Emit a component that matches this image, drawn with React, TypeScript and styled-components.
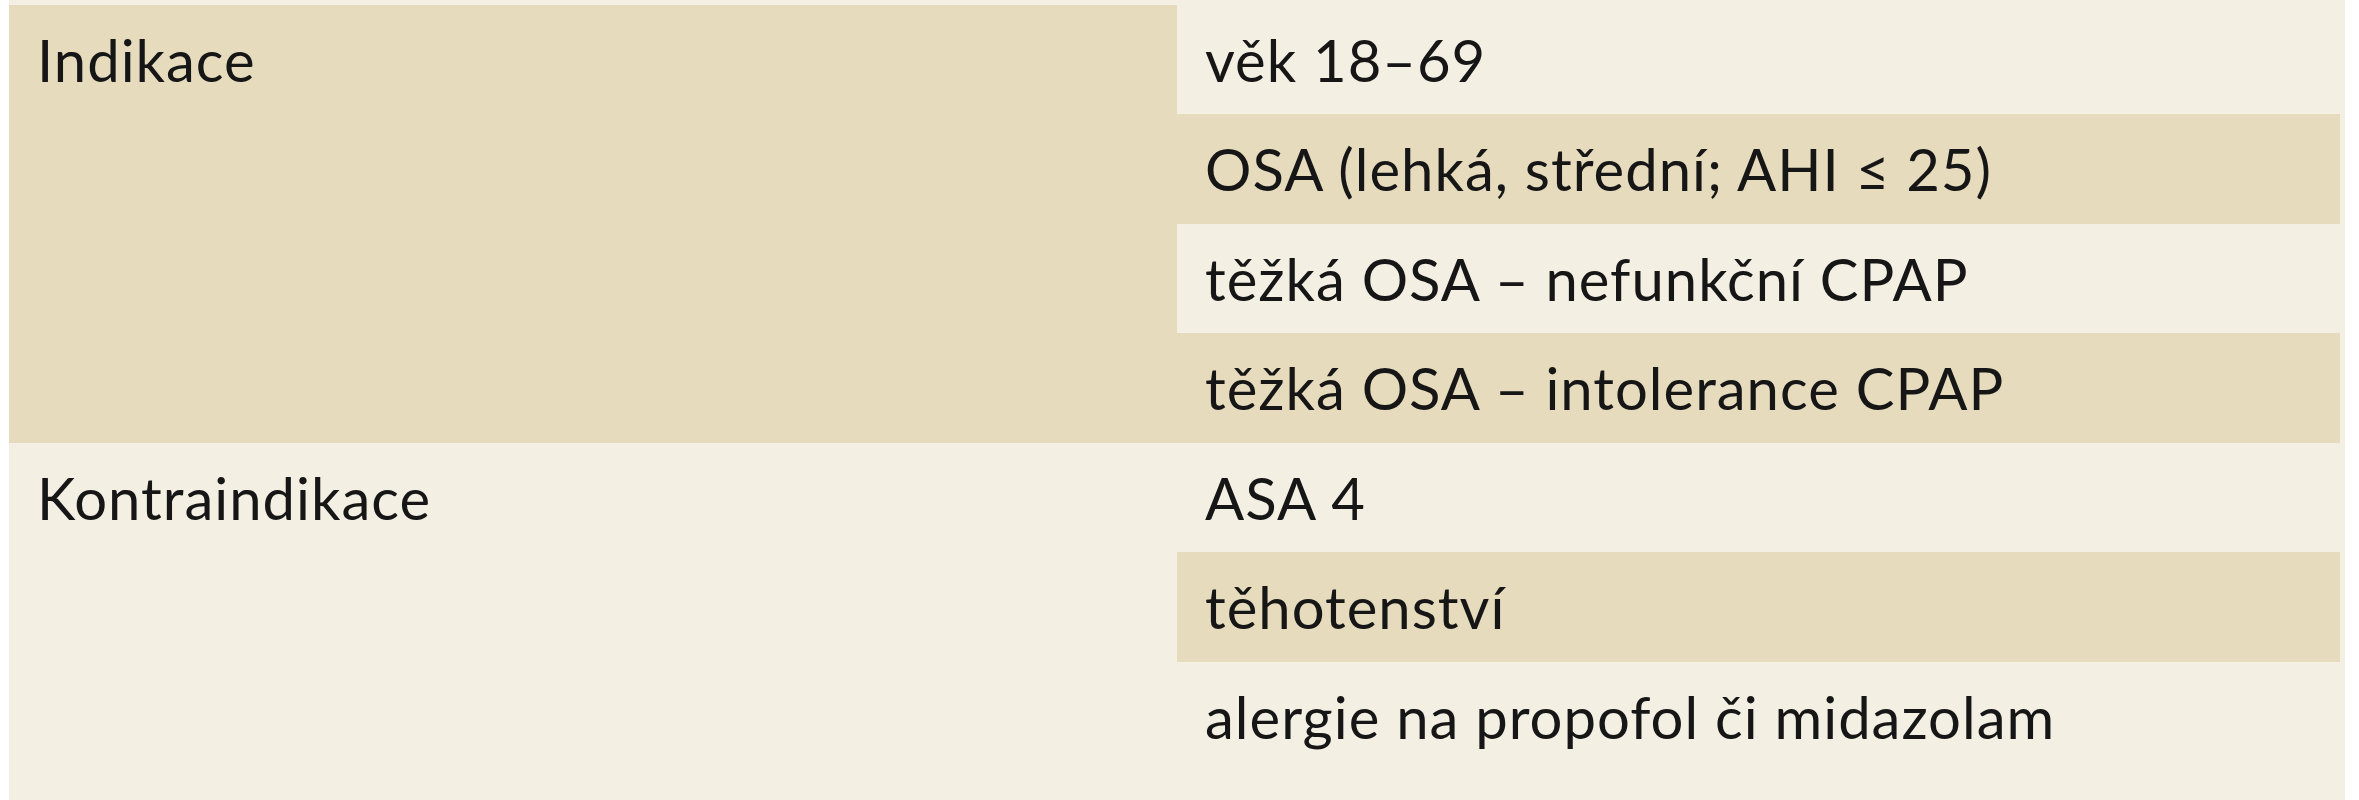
import React from "react";
import styled, { createGlobalStyle } from "styled-components";

const Global = createGlobalStyle`
  html, body {
    margin: 0;
    padding: 0;
    background: #ffffff;
  }
  body {
    font-family: Lato, "Open Sans", "Liberation Sans", sans-serif;
    color: #161616;
  }
`;

const BEIGE = "#e6dcbd";
const CREAM = "#f4efe3";

const Table = styled.div`
  margin-left: 9px;
  width: 2336px;
  min-height: 800px;
  box-sizing: border-box;
  padding: 4.5px 5px 0 0;
  background: ${CREAM};
  display: flex;
  flex-direction: column;
`;

const Group = styled.div`
  display: grid;
  grid-template-columns: 1168px 1fr;
`;

const Label = styled.div<{ $shaded: boolean }>`
  background: ${(p) => (p.$shaded ? BEIGE : CREAM)};
  box-sizing: border-box;
  padding: 20px 0 0 28px;
  font-size: 58px;
  line-height: 69px;
  letter-spacing: 1px;
`;

const Items = styled.div`
  display: flex;
  flex-direction: column;
`;

const Item = styled.div<{ $shaded: boolean }>`
  background: ${(p) => (p.$shaded ? BEIGE : CREAM)};
  box-sizing: border-box;
  height: 109.5px;
  padding: 20px 0 0 28px;
  font-size: 58px;
  line-height: 69px;
  letter-spacing: 1px;
  white-space: nowrap;
`;

const data = [
  {
    label: "Indikace",
    shaded: true,
    items: [
      "věk 18–69",
      "OSA (lehká, střední; AHI ≤ 25)",
      "těžká OSA – nefunkční CPAP",
      "těžká OSA – intolerance CPAP",
    ],
  },
  {
    label: "Kontraindikace",
    shaded: false,
    items: ["ASA 4", "těhotenství", "alergie na propofol či midazolam"],
  },
];

export default function App() {
  return (
    <>
      <Global />
      <Table>
        {data.map((g) => (
          <Group key={g.label}>
            <Label $shaded={g.shaded}>{g.label}</Label>
            <Items>
              {g.items.map((it, i) => (
                <Item key={it} $shaded={i % 2 === 1}>
                  {it}
                </Item>
              ))}
            </Items>
          </Group>
        ))}
      </Table>
    </>
  );
}
